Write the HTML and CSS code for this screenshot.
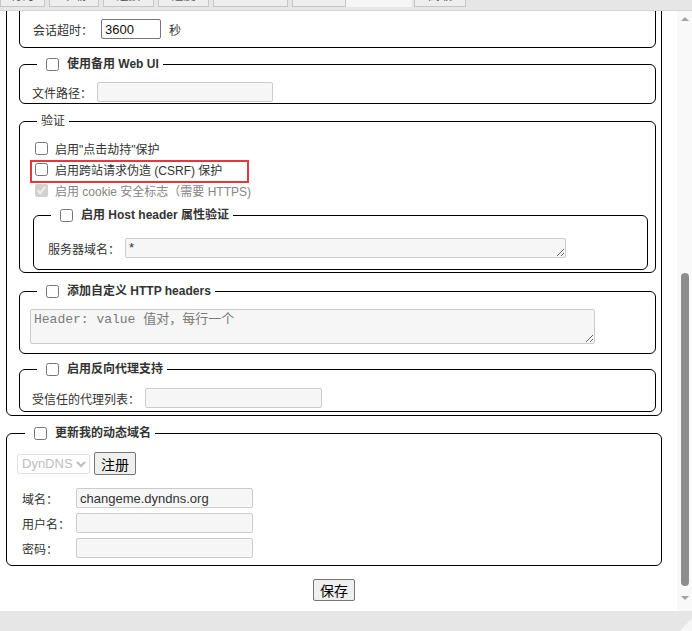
FILE: index.html
```html
<!DOCTYPE html>
<html lang="zh-CN">
<head>
    <meta charset="UTF-8">
    <meta name="viewport" content="width=device-width, initial-scale=1.0">
    <title>选项 - Web UI</title>
    <link rel="stylesheet" href="styles.css">
</head>
<body>
    <div class="tabbar">
        <div class="tab w45"><span>行为</span></div>
        <div class="tab w50"><span>下载</span></div>
        <div class="tab w51"><span>连接</span></div>
        <div class="tab w51"><span>速度</span></div>
        <div class="tab w75"><span>BitTorrent</span></div>
        <div class="tab w54"><span>RSS</span></div>
        <div class="tab tab-active w66"><span>Web UI</span></div>
        <div class="tab w52"><span>高级</span></div>
    </div>

    <div class="frame">
        <div class="viewport">
            <div class="page">
                <fieldset class="group outer">
                    <fieldset class="group session">
                        <div class="row">
                            <input type="text" class="num-input ban-input">
                        </div>
                        <div class="row row-next">
                            <label class="field-label gap8">会话超时：</label>
                            <input type="text" class="num-input" value="3600">
                            <span class="unit">秒</span>
                        </div>
                    </fieldset>

                    <fieldset class="group alt-ui">
                        <legend><label class="legend-check"><input type="checkbox"><span>使用备用 Web UI</span></label></legend>
                        <div class="row">
                            <label class="field-label">文件路径：</label>
                            <input type="text" class="text-input w176">
                        </div>
                    </fieldset>

                    <fieldset class="group auth">
                        <legend class="plain">验证</legend>
                        <label class="check-row"><input type="checkbox"><span>启用"点击劫持"保护</span></label>
                        <label class="check-row highlight"><input type="checkbox"><span>启用跨站请求伪造 (CSRF) 保护</span></label>
                        <label class="check-row disabled"><input type="checkbox" checked disabled><span>启用 cookie 安全标志（需要 HTTPS)</span></label>

                        <fieldset class="group host">
                            <legend><label class="legend-check"><input type="checkbox"><span>启用 Host header 属性验证</span></label></legend>
                            <div class="row">
                                <label class="field-label">服务器域名：</label>
                                <textarea class="text-area host-area" rows="1">*</textarea>
                            </div>
                        </fieldset>
                    </fieldset>

                    <fieldset class="group headers">
                        <legend><label class="legend-check"><input type="checkbox"><span>添加自定义 HTTP headers</span></label></legend>
                        <textarea class="text-area headers-area" rows="2" placeholder="Header: value 值对，每行一个"></textarea>
                    </fieldset>

                    <fieldset class="group proxy">
                        <legend><label class="legend-check"><input type="checkbox"><span>启用反向代理支持</span></label></legend>
                        <div class="row">
                            <label class="field-label">受信任的代理列表：</label>
                            <input type="text" class="text-input w177">
                        </div>
                    </fieldset>
                </fieldset>

                <fieldset class="group ddns">
                    <legend><label class="legend-check"><input type="checkbox"><span>更新我的动态域名</span></label></legend>
                    <div class="ddns-service">
                        <select class="service-select" disabled>
                            <option>DynDNS</option>
                            <option>NO-IP</option>
                        </select>
                        <button type="button" class="btn">注册</button>
                    </div>
                    <div class="ddns-grid">
                        <label class="field-label">域名：</label>
                        <input type="text" class="text-input w177" value="changeme.dyndns.org">
                        <label class="field-label">用户名：</label>
                        <input type="text" class="text-input w177">
                        <label class="field-label">密码：</label>
                        <input type="password" class="text-input w177">
                    </div>
                </fieldset>

                <div class="actions">
                    <button type="button" class="btn btn-save">保存</button>
                </div>
            </div>
        </div>

        <div class="scrollbar">
            <div class="sb-btn"><span class="arrow-up"></span></div>
            <div class="sb-thumb"></div>
            <div class="sb-btn sb-down"><span class="arrow-down"></span></div>
        </div>
    </div>

    <div class="statusbar">
        <span class="grip"></span>
    </div>
</body>
</html>
```

FILE: styles.css
```css
:root {
    --text: #333333;
    --text-muted: #858585;
    --line: #000000;
    --input-bg: #f6f6f6;
    --input-border: #cccccc;
    --font: "Liberation Sans", "Noto Sans CJK SC", sans-serif;
}

* {
    box-sizing: border-box;
}

html, body {
    margin: 0;
    padding: 0;
}

body {
    width: 692px;
    height: 631px;
    overflow: hidden;
    font-family: var(--font);
    font-size: 12px;
    color: var(--text);
    background: #ffffff;
}

/* tab strip, scrolled mostly out of view */
.tabbar {
    height: 11px;
    display: flex;
    gap: 4px;
    background: #e6e6e6;
    border-bottom: 1px solid #d6d6d6;
    overflow: hidden;
}

.tab {
    height: 7px;
    overflow: hidden;
    background: #eeeeee;
    border: 1px solid #c6c6c6;
    border-top: none;
}

.tab span {
    display: block;
    margin-top: -10px;
    font-size: 12px;
    line-height: 12px;
    text-align: center;
    color: #555;
}

.tab-active {
    background: #f5f5f5;
    border-color: #f5f5f5;
}

.tab-active span {
    visibility: hidden;
}

.w45 { width: 45px; }
.w50 { width: 50px; }
.w51 { width: 51px; }
.w52 { width: 52px; }
.w54 { width: 54px; }
.w66 { width: 66px; margin-left: -4px; margin-right: -2px; }
.w75 { width: 75px; }

.frame {
    display: flex;
    height: 600px;
}

.viewport {
    flex: 1;
    overflow: hidden;
}

.page {
    margin-top: -22px;
}

/* fieldsets */
.group {
    margin: 0;
    padding: 0 6px 0 12px;
    min-width: 0;
    border: 1px solid var(--line);
    border-radius: 6px;
}

.group legend {
    margin-left: 5px;
    padding: 0 4px;
    height: 16px;
    line-height: 16px;
}

.legend-check {
    display: flex;
    align-items: center;
    font-weight: bold;
}

.legend-check input {
    margin: 0 8px 0 5px;
}

.outer {
    margin: 0 15px 0 6px;
    padding: 0 5px 3px 12px;
    border-radius: 0 0 6px 6px;
}

.session {
    padding: 0 6px 8px 13px;
}

.ban-input {
    margin-left: 140px;
}

.alt-ui {
    margin-top: 8px;
    padding-top: 10px;
    padding-bottom: 1px;
}

.auth {
    margin-top: 9px;
    padding: 11px 7px 2px 12px;
}

.host {
    margin: 9px 0 0 1px;
    padding: 15px 6px 11px 14px;
}

.host legend {
    margin-left: 3px;
}

.headers {
    margin-top: 10px;
    padding-top: 10px;
    padding-bottom: 9px;
}

.proxy {
    margin-top: 7px;
    padding-top: 11px;
    padding-bottom: 3px;
}

.ddns {
    margin: 9px 15px 0 6px;
    padding: 11px 6px 7px 10px;
}

.ddns legend {
    margin-left: 8px;
}

/* rows */
.row {
    display: flex;
    align-items: center;
    height: 20px;
}

.row-next {
    margin-top: 8px;
}

.field-label {
    margin-right: 5px;
    white-space: nowrap;
}

.gap8 {
    margin-right: 8px;
}

.unit {
    margin-left: 8px;
}

.check-row {
    position: relative;
    display: flex;
    align-items: center;
    height: 16px;
    margin-bottom: 5px;
}

.check-row:last-of-type {
    margin-bottom: 0;
}

.check-row input {
    margin: 0 7px 0 3px;
}

.check-row.disabled {
    color: var(--text-muted);
}

.highlight::after {
    content: "";
    position: absolute;
    left: -2px;
    top: -1px;
    width: 215px;
    height: 19px;
    border: 2px solid #e8363c;
}

/* inputs */
.num-input {
    width: 60px;
    height: 20px;
    padding: 0 3px;
    font-family: var(--font);
    font-size: 13px;
    color: #111;
    background: #ffffff;
    border: 1px solid #767676;
    border-radius: 2px;
}

.text-input {
    height: 20px;
    padding: 0 3px;
    font-family: var(--font);
    font-size: 13px;
    color: var(--text);
    background: var(--input-bg);
    border: 1px solid var(--input-border);
    border-radius: 2px;
}

.w176 { width: 176px; }
.w177 { width: 177px; }

.text-area {
    display: block;
    padding: 2px 3px;
    font-family: "Liberation Mono", "Noto Sans CJK SC", monospace;
    font-size: 13px;
    line-height: 15px;
    color: var(--text);
    background: var(--input-bg);
    border: 1px solid var(--input-border);
    border-radius: 2px;
}

.text-area::placeholder {
    color: #7a7a7a;
}

.host-area {
    width: 441px;
    height: 20px;
    padding-top: 1px;
    font-family: var(--font);
    overflow: hidden;
}

.headers-area {
    width: 565px;
    height: 35px;
    margin-left: -2px;
}

/* dynamic dns */
.ddns-service {
    display: flex;
    align-items: center;
    gap: 4px;
}

.service-select {
    width: 73px;
    height: 20px;
    font-family: var(--font);
    font-size: 13px;
    color: #a3a3a3;
    background: #ffffff;
    border: 1px solid #d4d4d4;
    border-radius: 2px;
}

.btn {
    height: 23px;
    padding: 0 6px;
    font-family: "Noto Sans CJK SC", sans-serif;
    font-size: 14px;
    line-height: 20px;
    color: #000;
    background: #efefef;
    border: 1px solid #767676;
    border-radius: 2px;
}

.ddns-grid {
    display: grid;
    grid-template-columns: 54px 177px;
    row-gap: 5px;
    align-items: center;
    margin-top: 13px;
    padding-left: 5px;
}

.ddns-grid .field-label {
    margin: 0;
}

.actions {
    margin-top: 13px;
    padding-right: 9px;
    text-align: center;
}

.btn-save {
    height: 22px;
}

/* fake scrollbar */
.scrollbar {
    width: 15px;
    display: flex;
    flex-direction: column;
    align-items: center;
    background: #f9f9f9;
}

.sb-btn {
    height: 15px;
    width: 15px;
    display: flex;
    align-items: center;
    justify-content: center;
}

.arrow-up {
    border-left: 4px solid transparent;
    border-right: 4px solid transparent;
    border-bottom: 4px solid #a3a3a3;
}

.arrow-down {
    border-left: 4px solid transparent;
    border-right: 4px solid transparent;
    border-top: 4px solid #a3a3a3;
}

.sb-thumb {
    margin-top: 247px;
    width: 8px;
    height: 313px;
    border-radius: 4px;
    background: #8d8d8d;
}

.sb-down {
    margin-top: 4px;
}

.statusbar {
    height: 20px;
    display: flex;
    justify-content: flex-end;
    align-items: flex-end;
    background: #e6e6e6;
}

.grip {
    width: 12px;
    height: 12px;
    background: linear-gradient(135deg, transparent 50%, #f6f6f6 50%);
}
```
